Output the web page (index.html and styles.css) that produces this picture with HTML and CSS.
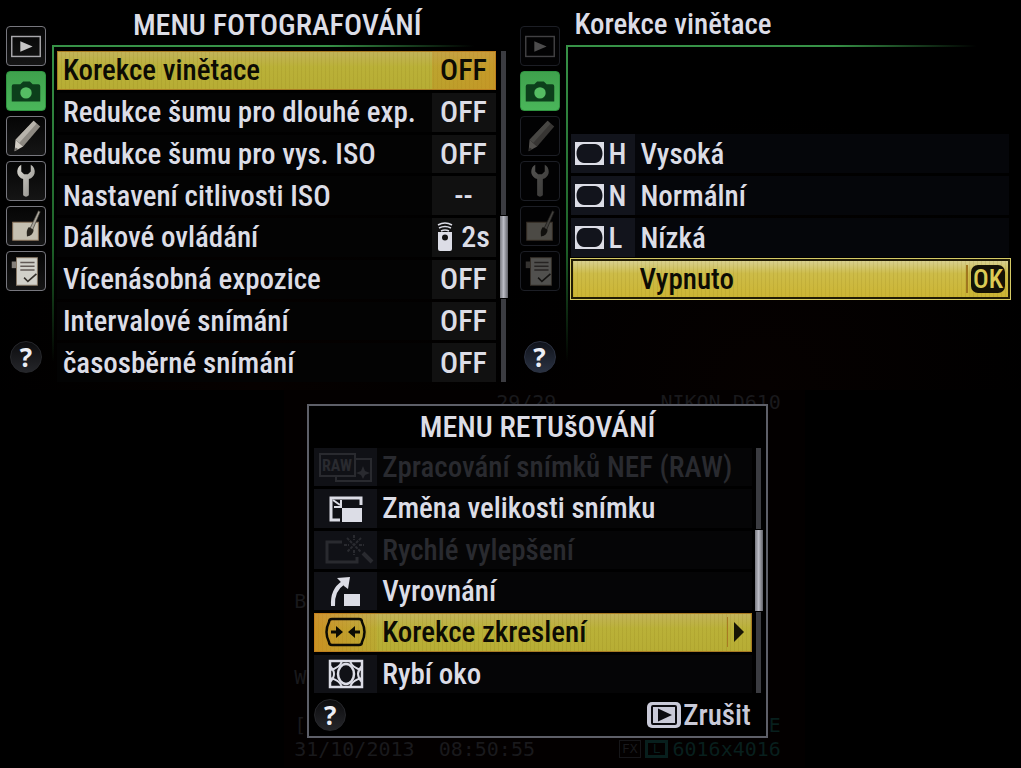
FILE: index.html
```
<!DOCTYPE html>
<html lang="cs">
<head>
<meta charset="utf-8">
<meta name="viewport" content="width=device-width, initial-scale=1">
<title>Menu fotografování</title>
<link rel="stylesheet" href="styles.css">
</head>
<body>
<svg class="sprite" aria-hidden="true">
  <defs>
    <linearGradient id="metal" x1="0" y1="0" x2="1" y2="1">
      <stop offset="0" stop-color="#d8d6d0"/><stop offset="1" stop-color="#908e89"/>
    </linearGradient>
  </defs>
  <symbol id="i-play" viewBox="0 0 40 40">
    <rect x="5" y="10" width="30" height="21" fill="none" stroke="#aaa9ad" stroke-width="1.500"/>
    <path d="M14 15 27 20.500 14 26Z" fill="#c6c5c5"/>
  </symbol>
  <symbol id="i-camera" viewBox="0 0 40 40">
    <path d="M7 13H14L17 10H24L27 13H33Q35 13 35 15V31H5V15Q5 13 7 13Z" fill="#0c3f1b"/>
    <circle cx="20" cy="22" r="6" fill="#55bd63"/>
  </symbol>
  <symbol id="i-pencil" viewBox="0 0 40 40">
    <path d="M28 4 35 10 17 31 9 24Z" fill="#8d8982"/>
    <path d="M28 4 31 7 13 27 9 24Z" fill="#b8b4ac"/>
    <path d="M9 24 17 31 8 36Z" fill="#d2cdc4"/>
    <path d="M8 36 9 32 12 34Z" fill="#6f6b66"/>
  </symbol>
  <symbol id="i-wrench" viewBox="0 0 40 40">
    <path d="M15 3Q10 6 11 12 12 16 17 18V35Q20 38 23 35V18Q28 16 29 12 30 6 25 3V10L22 13H18L15 10Z" fill="url(#metal)"/>
  </symbol>
  <symbol id="i-brush" viewBox="0 0 40 40">
    <rect x="6" y="16" width="27" height="19" fill="#c5c0b1" stroke="#8c745b"/>
    <path d="M33 4 35 5 27 24 24 23Z" fill="#aaa69c" stroke="#3c3934" stroke-width=".7"/>
    <path d="M23 21 28 24Q28 30 21 31 20 24 23 21Z" fill="#29261f"/>
  </symbol>
  <symbol id="i-list" viewBox="0 0 40 40">
    <rect x="5" y="10" width="5" height="7" fill="#85807a"/>
    <rect x="10" y="6" width="22" height="29" fill="#d1d0c9" stroke="#887865"/>
    <path d="M14 11H29M14 15H29M14 19H29" stroke="#625a56" stroke-width="1.500"/>
    <path d="M18 27 22 31 31 23" fill="none" stroke="#35312c" stroke-width="1.700"/>
  </symbol>
  <symbol id="i-vignette" viewBox="0 0 29 23">
    <path d="M0 0H29V23H0ZM9 2C5 2 1.500 6 1.500 11.500S5 21 9 21H20C24 21 27.500 17 27.500 11.500S24 2 20 2Z" fill="currentColor" fill-rule="evenodd"/>
  </symbol>
  <symbol id="i-remote" viewBox="0 0 16 30">
    <path d="M1 10H15V27Q15 29 13 29H3Q1 29 1 27ZM8 12.500A3 3 0 1 0 8 18.500 3 3 0 1 0 8 12.500Z" fill="currentColor" fill-rule="evenodd"/>
    <path d="M1 3Q8-1 15 3M2 6Q8 3 14 6M4 9Q8 7 12 9" fill="none" stroke="currentColor" stroke-width="1.500"/>
  </symbol>
  <symbol id="i-resize" viewBox="0 0 63 38">
    <path d="M26 31H17V9H47V16" fill="none" stroke="currentColor" stroke-width="3"/>
    <rect x="28" y="19" width="20" height="14" fill="currentColor"/>
    <path d="M19 11 26 16M27 11V18H20" fill="none" stroke="currentColor" stroke-width="2"/>
  </symbol>
  <symbol id="i-quick" viewBox="0 0 63 38">
    <path d="M28 11H13V31H43V26" fill="none" stroke="currentColor" stroke-width="3"/>
    <path d="M33 7 47 21M47 7 33 21M40 4V9M40 19V24M30 14H35M45 14H50" stroke="currentColor" stroke-width="2" stroke-dasharray="3 1"/>
    <path d="M49 22 58 31" stroke="currentColor" stroke-width="4"/>
  </symbol>
  <symbol id="i-straighten" viewBox="0 0 63 38">
    <path d="M19 34Q18 18 29 11" fill="none" stroke="currentColor" stroke-width="4"/>
    <path d="M23 6 36 5 34 17 30 14 26 9Z" fill="currentColor"/>
    <rect x="30" y="22" width="16" height="12" fill="currentColor"/>
  </symbol>
  <symbol id="i-distort" viewBox="0 0 63 38">
    <path d="M18 6H45Q48 6 48 9 53 19 48 29 48 32 45 32H18Q15 32 15 29 10 19 15 9 15 6 18 6Z" fill="none" stroke="currentColor" stroke-width="2.500"/>
    <path d="M17 17.500H22V13L29 19 22 25V20.500H17ZM46 17.500H41V13L34 19 41 25V20.500H46Z" fill="currentColor"/>
  </symbol>
  <symbol id="i-fisheye" viewBox="0 0 63 38">
    <rect x="16" y="6" width="32" height="26" fill="none" stroke="currentColor" stroke-width="2.500"/>
    <ellipse cx="32" cy="19" rx="8" ry="10" fill="none" stroke="currentColor" stroke-width="2.500"/>
    <path d="M16 15Q26 13 28 6M36 6Q38 13 48 15M16 23Q26 25 28 32M36 32Q38 25 48 23M16 11Q24 19 16 27M48 11Q40 19 48 27" fill="none" stroke="currentColor" stroke-width="2"/>
  </symbol>
  <symbol id="i-playkey" viewBox="0 0 34 28">
    <rect x="0" y="1" width="34" height="26" rx="5" fill="currentColor"/>
    <rect x="5" y="5" width="24" height="18" rx="1" fill="none" stroke="#0b0b10" stroke-width="2"/>
    <path d="M11 7.500 25 14 11 20.500Z" fill="#0b0b10"/>
  </symbol>
</svg>

<main class="board">
  <section class="screen" aria-labelledby="t1">
    <nav class="tabs" aria-label="Nabídky">
      <button class="tab" aria-label="Přehrávání"><svg><use href="#i-play"/></svg></button>
      <button class="tab tab-on" aria-label="Fotografování"><svg><use href="#i-camera"/></svg></button>
      <button class="tab" aria-label="Uživatelské funkce"><svg><use href="#i-pencil"/></svg></button>
      <button class="tab" aria-label="Nastavení"><svg><use href="#i-wrench"/></svg></button>
      <button class="tab" aria-label="Retušování"><svg><use href="#i-brush"/></svg></button>
      <button class="tab" aria-label="Moje menu"><svg><use href="#i-list"/></svg></button>
      <button class="help" aria-label="Nápověda">?</button>
    </nav>
    <div class="panel">
      <h1 class="title title-center" id="t1">MENU FOTOGRAFOVÁNÍ</h1>
      <div class="frame">
        <ul class="rows rows-menu">
          <li><button class="row row-value row-on"><span>Korekce vinětace</span><span class="value">OFF</span></button></li>
          <li><button class="row row-value"><span>Redukce šumu pro dlouhé exp.</span><span class="value">OFF</span></button></li>
          <li><button class="row row-value"><span>Redukce šumu pro vys. ISO</span><span class="value">OFF</span></button></li>
          <li><button class="row row-value"><span>Nastavení citlivosti ISO</span><span class="value">--</span></button></li>
          <li><button class="row row-value"><span>Dálkové ovládání</span><span class="value"><svg class="remote" aria-hidden="true"><use href="#i-remote"/></svg>2s</span></button></li>
          <li><button class="row row-value"><span>Vícenásobná expozice</span><span class="value">OFF</span></button></li>
          <li><button class="row row-value"><span>Intervalové snímání</span><span class="value">OFF</span></button></li>
          <li><button class="row row-value"><span>časosběrné snímání</span><span class="value">OFF</span></button></li>
        </ul>
        <div class="scroll scroll-menu"><div class="thumb"></div></div>
      </div>
    </div>
  </section>

  <section class="screen screen-sub" aria-labelledby="t2">
    <nav class="tabs" aria-label="Nabídky">
      <button class="tab" aria-label="Přehrávání"><svg><use href="#i-play"/></svg></button>
      <button class="tab tab-on" aria-label="Fotografování"><svg><use href="#i-camera"/></svg></button>
      <button class="tab" aria-label="Uživatelské funkce"><svg><use href="#i-pencil"/></svg></button>
      <button class="tab" aria-label="Nastavení"><svg><use href="#i-wrench"/></svg></button>
      <button class="tab" aria-label="Retušování"><svg><use href="#i-brush"/></svg></button>
      <button class="tab" aria-label="Moje menu"><svg><use href="#i-list"/></svg></button>
      <button class="help" aria-label="Nápověda">?</button>
    </nav>
    <div class="panel">
      <h2 class="title title-sub" id="t2">Korekce vinětace</h2>
      <div class="frame frame-options">
        <ul class="rows">
          <li><button class="row row-option"><span class="key"><svg class="vignette" aria-hidden="true"><use href="#i-vignette"/></svg>H</span><span>Vysoká</span></button></li>
          <li><button class="row row-option"><span class="key"><svg class="vignette" aria-hidden="true"><use href="#i-vignette"/></svg>N</span><span>Normální</span></button></li>
          <li><button class="row row-option"><span class="key"><svg class="vignette" aria-hidden="true"><use href="#i-vignette"/></svg>L</span><span>Nízká</span></button></li>
          <li class="picked"><button class="row row-option row-on"><span></span><span>Vypnuto</span><span class="ok-cell"><span class="ok">OK</span></span></button></li>
        </ul>
      </div>
    </div>
  </section>

  <section class="screen-retouch" aria-labelledby="t3">
    <div class="playback" aria-hidden="true">
      <div class="ghost-line ghost-top"><span>29/29</span><span>NIKON D610</span></div>
      <div class="ghost-marks"><span>B</span><span>W</span></div>
      <div class="ghost-line"><span>[1</span><span class="ghost-teal">E</span></div>
      <div class="ghost-line"><span>31/10/2013&nbsp; 08:50:55</span><span class="ghost-teal ghost-size"><i class="fx">FX</i><i class="lsize">L</i>6016x4016</span></div>
    </div>
    <div class="dialog">
      <h2 class="title title-dialog" id="t3">MENU RETUšOVÁNÍ</h2>
      <div class="dialog-body">
        <ul class="rows rows-dialog">
          <li><button class="row row-icon" disabled><span class="cell"><svg viewBox="0 0 63 38" aria-hidden="true">
            <path d="M6 6H41V28H6ZM41 11H57V33H22V28" fill="none" stroke="currentColor" stroke-width="2"/>
            <path d="M49 18 51 23 56 25 51 27 49 31 47 27 42 25 47 23Z" fill="currentColor"/>
            <text x="23" y="23" text-anchor="middle" class="raw-text" fill="currentColor">RAW</text>
          </svg></span><span>Zpracování snímků NEF (RAW)</span></button></li>
          <li><button class="row row-icon"><span class="cell"><svg><use href="#i-resize"/></svg></span><span>Změna velikosti snímku</span></button></li>
          <li><button class="row row-icon" disabled><span class="cell"><svg><use href="#i-quick"/></svg></span><span>Rychlé vylepšení</span></button></li>
          <li><button class="row row-icon"><span class="cell"><svg><use href="#i-straighten"/></svg></span><span>Vyrovnání</span></button></li>
          <li><button class="row row-icon row-on"><span class="cell"><svg><use href="#i-distort"/></svg></span><span>Korekce zkreslení</span><span class="arrow"></span></button></li>
          <li><button class="row row-icon"><span class="cell"><svg><use href="#i-fisheye"/></svg></span><span>Rybí oko</span></button></li>
        </ul>
        <div class="scroll scroll-dialog"><div class="thumb"></div></div>
      </div>
      <div class="dialog-foot">
        <button class="help" aria-label="Nápověda">?</button>
        <button class="cancel"><svg aria-hidden="true"><use href="#i-playkey"/></svg>Zrušit</button>
      </div>
    </div>
  </section>
</main>
</body>
</html>
```
FILE: styles.css
```
* { box-sizing: border-box; }

body {
  margin: 0;
  background: #000;
  color: #dcdde6;
  font: 500 29px/36px "Roboto Condensed", "Liberation Sans Narrow", "Open Sans", sans-serif;
}

button {
  margin: 0;
  padding: 0;
  border: 0;
  background: none;
  color: inherit;
  font: inherit;
  cursor: pointer;
}

ul { list-style: none; margin: 0; padding: 0; }
svg { display: block; }
.sprite { position: absolute; width: 0; height: 0; }

.board {
  display: grid;
  grid-template-columns: 1fr 1fr;
  min-height: 100vh;
  align-content: start;
}

/* Camera screens */
.screen {
  display: grid;
  grid-template-columns: 40px 1fr;
  column-gap: 6px;
  min-height: 389px;
  padding: 4px 0 8px 6px;
  background: radial-gradient(circle at 50% 100%, #060100, #000 60%);
}

.screen-sub { padding: 4px 9px 8px 9px; }

.tabs {
  display: flex;
  flex-direction: column;
  align-items: center;
  gap: 5px;
  padding-top: 22px;
}

.tab {
  width: 40px;
  height: 40px;
  border: 1px solid #77777e;
  border-radius: 4px;
  background: linear-gradient(#050505, #151515);
}

.tab svg { width: 38px; height: 38px; }

.tab-on {
  border-color: #2f9440;
  background: linear-gradient(#3fa14d, #4ab65a);
}

.screen-sub .tab:not(.tab-on) { border-color: #1c1e25; background: #020203; }
.screen-sub .tab:not(.tab-on) svg { opacity: 0.38; }

.help {
  width: 32px;
  height: 32px;
  border: 1px solid #26272b;
  border-radius: 50%;
  background: linear-gradient(#0c0c0e, #25262a);
  color: #eceef5;
  font: 700 26px/28px "Open Sans", sans-serif;
}

.tabs .help { margin-top: 45px; }
.screen-sub .help { border-color: #2b3140; background: linear-gradient(#10131b, #2a3242); }

.title {
  margin: 0;
  font-size: 30px;
  line-height: 41px;
  font-weight: 500;
}

.title-center { padding-right: 8px; text-align: center; }
.title-sub { padding-left: 9px; font-size: 29px; }

.frame {
  display: grid;
  grid-template-columns: 1fr 8px;
  column-gap: 4px;
  padding: 4px 3px 0 3px;
  border: solid transparent;
  border-width: 2px 0 0 2px;
  background:
    linear-gradient(90deg, #379247 60%, transparent 92%) border-box top / 100% 2px no-repeat,
    linear-gradient(#379247, #1d6128 60%, transparent 94%) border-box left / 2px 100% no-repeat;
}

.frame-options {
  grid-template-columns: 1fr;
  min-height: 337px;
  padding: 87px 3px 0 3px;
}

.rows {
  display: grid;
  grid-auto-rows: 39px;
  row-gap: 3px;
}

.rows-menu { grid-auto-rows: 1fr; min-height: 331px; }
.rows-dialog { grid-auto-rows: 1fr; min-height: 245px; }

.row {
  display: grid;
  align-items: center;
  width: 100%;
  height: 100%;
  background: #030303;
  text-align: left;
  white-space: nowrap;
}

.row-value { grid-template-columns: 1fr 64px; padding-left: 6px; }
.row-option { grid-template-columns: 64px 1fr auto; column-gap: 6px; background: #05060a; }
.row-icon { grid-template-columns: 63px 1fr auto; column-gap: 5px; background: #050506; }

.value {
  display: flex;
  align-items: center;
  justify-content: center;
  gap: 8px;
  height: 100%;
  background: #111;
  font-size: 30px;
}

.remote { width: 16px; height: 30px; }

.row-on {
  background:
    repeating-linear-gradient(90deg, rgba(120, 100, 10, 0.12) 0 1px, transparent 1px 4px),
    linear-gradient(#c3b35c, #bab138 40%, #b7ad34);
  box-shadow: inset 0 0 0 1px #a87b22;
  color: #0c0b04;
}

.row-on .value { background: linear-gradient(90deg, rgba(200, 125, 20, 0.25), rgba(210, 130, 25, 0.5)); }
.row-on .cell { background: linear-gradient(90deg, rgba(210, 130, 25, 0.65), rgba(200, 125, 20, 0.1)); }

.key {
  display: flex;
  align-items: center;
  gap: 5px;
  height: 100%;
  padding-left: 4px;
  background: #12141c;
}

.vignette { width: 29px; height: 23px; }

.picked {
  margin: -2px -2px -1px -1px;
  padding: 2px;
  border: 1px solid #d5ca66;
  background: #211b04;
}

.picked .row-on {
  grid-template-columns: 61px 1fr auto;
  box-shadow: none;
  background:
    repeating-linear-gradient(90deg, rgba(120, 100, 10, 0.12) 0 1px, transparent 1px 4px),
    linear-gradient(#d8d090, #cdbc48 35%, #ccb534);
}

.ok-cell {
  padding: 0 3px;
  border-left: 2px solid #a0761f;
}

.ok {
  display: block;
  padding: 0 2px;
  border-radius: 7px;
  background: #151205;
  color: #dccb55;
  font-size: 26px;
  line-height: 28px;
}

/* Scroll bars */
.scroll {
  display: grid;
  justify-items: center;
  background: linear-gradient(#3b3c41, #3b3c41) center / 5px 100% no-repeat;
}

.scroll-menu { grid-template-rows: 1fr 84px 83px; }
.scroll-dialog { grid-template-rows: 81px 83px 1fr; }

.thumb {
  grid-row: 2;
  width: 8px;
  border: solid #000;
  border-width: 1px 0;
  background: linear-gradient(90deg, #77787f, #bcbdc6 45%, #606168);
}

/* Retouch dialog over the playback view */
.screen-retouch {
  grid-column: 1 / -1;
  display: grid;
  justify-self: center;
  width: 51%;
  min-width: 500px;
  margin-left: 68px;
  background: #030000;
}

.playback,
.dialog { grid-area: 1 / 1; }

.playback {
  display: flex;
  flex-direction: column;
  padding: 0 24px 6px 10px;
  color: #19191c;
  font: 20px/24px "DejaVu Sans Mono", monospace;
}

.playback i { font-style: normal; }
.ghost-line { display: flex; justify-content: space-between; }
.ghost-top { padding-left: 202px; }
.ghost-marks {
  display: flex;
  flex: 1;
  flex-direction: column;
  justify-content: center;
  gap: 52px;
  padding-top: 150px;
}
.ghost-teal { color: #081f1d; }
.ghost-size { display: flex; align-items: center; gap: 4px; }
.fx { padding: 0 2px; border: 1px solid #161619; color: #19191c; font-size: 13px; line-height: 16px; }
.lsize { padding: 0 5px; border: 3px solid #081f1d; font-size: 13px; line-height: 12px; }

.dialog {
  margin: 14px 37px 29px 23px;
  border: 2px solid #5d5f68;
  background: #000;
}

.title-dialog { line-height: 42px; text-align: center; }

.dialog-body {
  display: grid;
  grid-template-columns: 1fr 8px;
  column-gap: 3px;
  padding: 0 3px 0 5px;
}

.cell {
  display: block;
  height: 100%;
  background: #101116;
}

.cell svg { width: 63px; height: 38px; }
.raw-text { font: 700 16px "Roboto Condensed", sans-serif; }
.row:disabled { color: #292a2f; cursor: default; }

.arrow {
  display: flex;
  align-items: center;
  height: 30px;
  padding: 0 8px 0 6px;
  border-left: 1px solid #a87b22;
}

.arrow::before {
  content: "";
  border: solid transparent;
  border-width: 10px 0 10px 10px;
  border-left-color: #171505;
}

.dialog-foot {
  display: flex;
  align-items: center;
  justify-content: space-between;
  padding: 4px 15px 3px 5px;
}

.cancel { display: flex; align-items: center; gap: 2px; color: #c9cad8; }
.cancel svg { width: 34px; height: 28px; }
```
